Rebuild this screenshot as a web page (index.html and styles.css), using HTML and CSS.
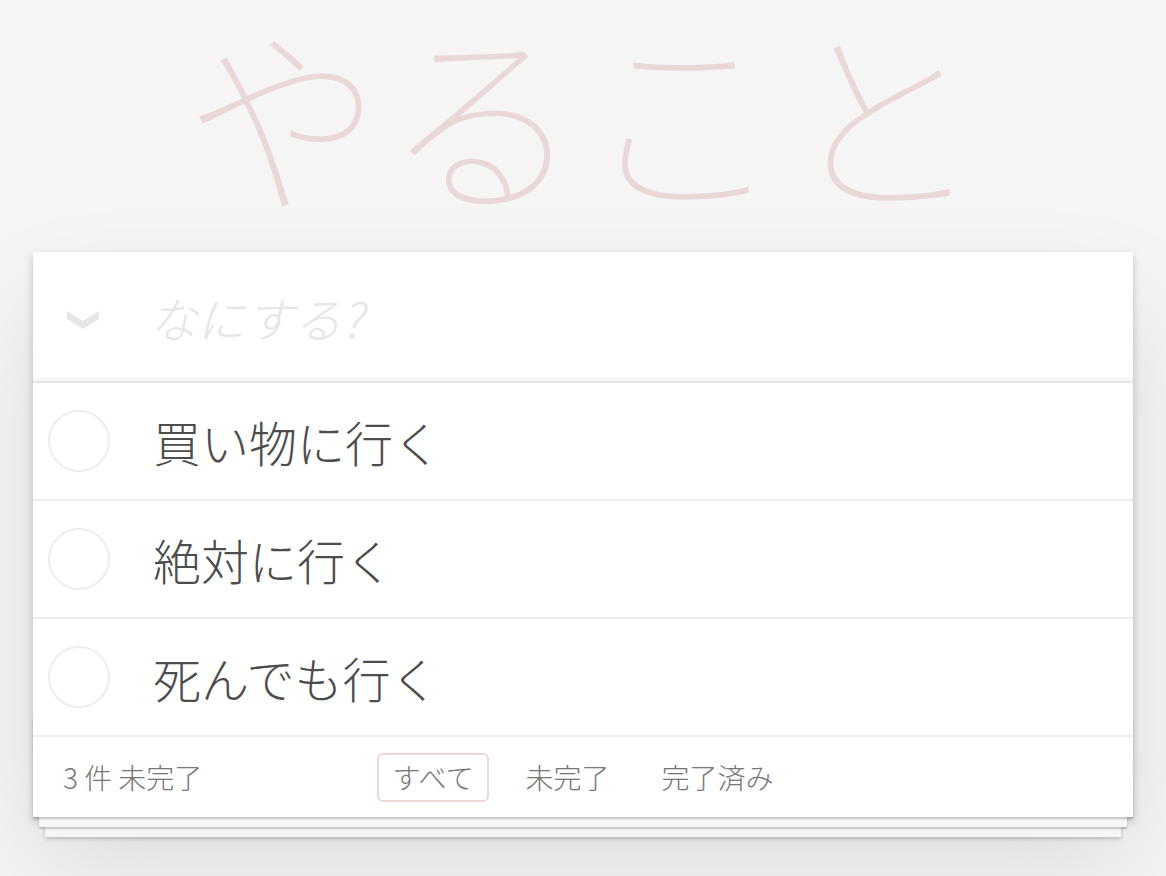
FILE: index.html
```html
<!DOCTYPE html>
<html lang="ja">
    <head>
        <meta charset="utf-8">
        <title>やること</title>
        <link rel="stylesheet" href="styles.css">
    </head>
    <body>
        <div class="page">
            <h1 class="title">やること</h1>
            <section class="todoapp">
                <header class="header">
                    <label class="toggle-all" for="toggle-all">
                        <svg width="32" height="20" viewBox="0 0 32 20">
                            <polygon points="0,1 16,11 32,1 32,9 16,19 0,9" fill="#e6e6e6" />
                        </svg>
                    </label>
                    <input id="toggle-all" class="toggle-all-input" type="checkbox">
                    <input class="new-todo" placeholder="なにする?">
                </header>
                <section class="main">
                    <ul class="todo-list">
                        <li class="todo">
                            <svg class="toggle" width="64" height="64" viewBox="0 0 64 64">
                                <circle cx="32" cy="32" r="30" fill="none" stroke="#ededed" stroke-width="2" />
                            </svg>
                            <label class="todo-label">買い物に行く</label>
                        </li>
                        <li class="todo">
                            <svg class="toggle" width="64" height="64" viewBox="0 0 64 64">
                                <circle cx="32" cy="32" r="30" fill="none" stroke="#ededed" stroke-width="2" />
                            </svg>
                            <label class="todo-label">絶対に行く</label>
                        </li>
                        <li class="todo">
                            <svg class="toggle" width="64" height="64" viewBox="0 0 64 64">
                                <circle cx="32" cy="32" r="30" fill="none" stroke="#ededed" stroke-width="2" />
                            </svg>
                            <label class="todo-label">死んでも行く</label>
                        </li>
                    </ul>
                </section>
                <footer class="footer">
                    <span class="todo-count">3 件 未完了</span>
                    <ul class="filters">
                        <li><a class="selected" href="#/">すべて</a></li>
                        <li><a href="#/active">未完了</a></li>
                        <li><a href="#/completed">完了済み</a></li>
                    </ul>
                </footer>
            </section>
        </div>
    </body>
</html>
```

FILE: styles.css
```css
html,
body {
    margin: 0;
    padding: 0;
    background: #f5f5f5;
}
body {
    font-family: "Noto Sans CJK JP", "Liberation Sans", sans-serif;
    font-weight: 300;
    color: #4d4d4d;
    padding-top: 1px;
    min-height: 875px;
}
.page {
    max-width: 1100px;
    min-width: 460px;
    margin: 0 auto;
}
.title {
    margin: 0 0 31px;
    height: 220px;
    font-size: 200px;
    line-height: 220px;
    font-weight: 100;
    text-align: center;
    color: rgba(175, 47, 47, 0.15);
}
.todoapp {
    position: relative;
    background: #fff;
    box-shadow: 0 4px 8px 0 rgba(0, 0, 0, 0.2),
                0 50px 100px 0 rgba(0, 0, 0, 0.1);
}
.header {
    position: relative;
}
.toggle-all {
    position: absolute;
    left: 34px;
    top: 58px;
    display: flex;
}
.toggle-all-input {
    display: none;
}
.new-todo {
    display: block;
    box-sizing: border-box;
    width: 100%;
    height: 129px;
    margin: 0;
    padding: 30px 32px 30px 116px;
    border: none;
    outline: none;
    background: transparent;
    font-family: inherit;
    font-size: 48px;
    font-weight: 300;
    line-height: 69px;
    color: #4d4d4d;
    box-shadow: inset 0 -4px 2px rgba(0, 0, 0, 0.03);
}
.new-todo::placeholder {
    font-style: italic;
    color: #e6e6e6;
}
.main {
    border-top: 2px solid #e6e6e6;
}
.todo-list {
    margin: 0;
    padding: 0;
    list-style: none;
}
.todo {
    position: relative;
    display: flex;
    align-items: center;
    font-size: 48px;
    border-bottom: 2px solid #ededed;
}
.toggle {
    position: absolute;
    left: 14px;
    top: 0;
    bottom: 0;
    margin: auto 0;
}
.todo-label {
    display: block;
    padding: 30px 120px 30px 120px;
    line-height: 56px;
    white-space: nowrap;
}
.footer {
    position: relative;
    height: 40px;
    padding: 20px 30px;
    color: #777;
    font-size: 28px;
    line-height: 40px;
}
.footer::before {
    content: "";
    position: absolute;
    left: 0;
    right: 0;
    bottom: 0;
    height: 100px;
    overflow: hidden;
    box-shadow: 0 2px 2px rgba(0, 0, 0, 0.2),
                0 16px 0 -6px #f6f6f6,
                0 18px 2px -6px rgba(0, 0, 0, 0.2),
                0 32px 0 -12px #f6f6f6,
                0 34px 4px -12px rgba(0, 0, 0, 0.2);
}
.todo-count {
    position: relative;
}
.filters {
    position: absolute;
    left: 0;
    right: 0;
    top: 0;
    bottom: 0;
    margin: 0;
    padding: 0;
    list-style: none;
    display: flex;
    justify-content: center;
    align-items: center;
    gap: 8px;
}
.filters a {
    display: block;
    margin: 0 6px;
    padding: 6px 14px;
    line-height: 33px;
    border: 2px solid transparent;
    border-radius: 6px;
    color: inherit;
    text-decoration: none;
}
.filters a.selected {
    border-color: rgba(175, 47, 47, 0.2);
}
```
